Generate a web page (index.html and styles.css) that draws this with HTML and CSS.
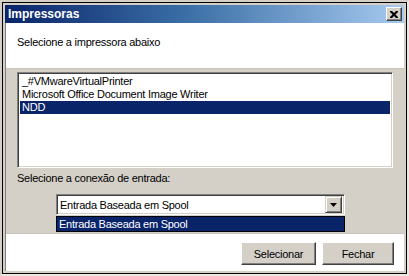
FILE: index.html
```html
<!DOCTYPE html>
<html>
<head>
<meta charset="utf-8">
<link rel="stylesheet" href="styles.css">
</head>
<body>
<div class="window">
  <div class="frame">
    <div class="titlebar">
      <span class="title">Impressoras</span>
      <div class="close">
        <svg width="8" height="7" viewBox="0 0 8 7"><path d="M0 0h2l2 2 2-2h2v1l-2.5 2.5L8 6v1H6L4 5 2 7H0V6l2.5-2.5L0 1z" fill="#000"/></svg>
      </div>
    </div>
    <div class="client">
      <div class="header">Selecione a impressora abaixo</div>
      <div class="body">
        <div class="listbox">
          <div class="item">_#VMwareVirtualPrinter</div>
          <div class="item">Microsoft Office Document Image Writer</div>
          <div class="item selected">NDD</div>
        </div>
        <div class="label">Selecione a conexão de entrada:</div>
        <div class="combo-wrap">
          <div class="combo">
            <span class="combo-text">Entrada Baseada em Spool</span>
            <div class="drop-btn">
              <svg width="7" height="4" viewBox="0 0 7 4"><path d="M0 0h7L3.5 4z" fill="#000"/></svg>
            </div>
          </div>
          <div class="dropdown">
            <div class="drop-item">Entrada Baseada em Spool</div>
          </div>
        </div>
      </div>
      <div class="footer">
        <div class="btn btn-sel">Selecionar</div>
        <div class="btn btn-close">Fechar</div>
      </div>
    </div>
  </div>
</div>
</body>
</html>
```

FILE: styles.css
```css
html, body {
  margin: 0;
  padding: 0;
  background: #ffffff;
}
body {
  font-family: "Liberation Sans", Arial, sans-serif;
  font-size: 11px;
  letter-spacing: -0.25px;
  color: #000;
}
.window {
  width: 409px;
  height: 276px;
  box-sizing: border-box;
  border: 2px solid;
  border-color: #d4d0c8 #ece9e2 #ece9e2 #d4d0c8;
}
.frame {
  height: 100%;
  box-sizing: border-box;
  border: 1px solid #000;
  padding: 2px;
  background: #d4d0c8;
  display: flex;
  flex-direction: column;
}
.titlebar {
  height: 18px;
  flex: none;
  background: linear-gradient(to right, #0a246a 0%, #3a6ea5 45%, #a6caf0 100%);
  display: flex;
  align-items: center;
  padding: 0 2px 0 3px;
}
.title {
  color: #fff;
  font-weight: bold;
  font-size: 12px;
  letter-spacing: 0;
  flex: 1;
}
.close {
  width: 16px;
  height: 14px;
  box-sizing: border-box;
  background: #d4d0c8;
  border: 1px solid;
  border-color: #fff #404040 #404040 #fff;
  box-shadow: inset -1px -1px #808080;
  display: flex;
  align-items: center;
  justify-content: center;
}
.client {
  flex: 1;
  display: flex;
  flex-direction: column;
  border-left: 1px solid #808080;
}
.header {
  height: 46px;
  box-sizing: border-box;
  background: #fff;
  padding: 13px 0 0 11px;
  border-bottom: 1px solid #c8c4bc;
}
.body {
  height: 164px;
  box-sizing: border-box;
  padding: 3px 11px 0 11px;
  background: #d4d0c8;
}
.listbox {
  height: 96px;
  box-sizing: border-box;
  background: #fff;
  border: 1px solid;
  border-color: #808080 #fff #fff #808080;
  box-shadow: inset 1px 1px #404040, inset -1px -1px #d4d0c8;
  padding: 2px 2px;
}
.item {
  height: 13px;
  line-height: 13px;
  padding-left: 2px;
  white-space: nowrap;
}
.item.selected {
  background: #0a246a;
  color: #fff;
}
.label {
  margin-top: 4px;
  height: 13px;
  line-height: 13px;
}
.combo-wrap {
  position: relative;
  margin: 9px 0 0 39px;
  width: 289px;
}
.combo {
  height: 21px;
  box-sizing: border-box;
  background: #fff;
  border: 1px solid;
  border-color: #808080 #fff #fff #808080;
  box-shadow: inset 1px 1px #404040, inset -1px -1px #d4d0c8;
  display: flex;
  align-items: center;
  padding: 2px 2px 2px 3px;
}
.combo-text {
  flex: 1;
}
.drop-btn {
  width: 17px;
  height: 17px;
  box-sizing: border-box;
  background: #d4d0c8;
  border: 1px solid;
  border-color: #d4d0c8 #404040 #404040 #d4d0c8;
  box-shadow: inset 1px 1px #fff, inset -1px -1px #808080;
  display: flex;
  align-items: center;
  justify-content: center;
}
.dropdown {
  position: absolute;
  left: 0;
  top: 22px;
  width: 289px;
  box-sizing: border-box;
  border: 1px solid #000;
  background: #fff;
}
.drop-item {
  height: 14px;
  line-height: 14px;
  background: #0a246a;
  color: #fff;
  padding-left: 2px;
}
.footer {
  flex: 1;
  background: #fff;
  border-top: 1px solid #c8c4bc;
  display: flex;
  justify-content: flex-end;
  gap: 6px;
  padding: 8px 10px 0 0;
}
.btn {
  height: 23px;
  box-sizing: border-box;
  background: #d4d0c8;
  border: 1px solid;
  border-color: #fff #404040 #404040 #fff;
  box-shadow: inset -1px -1px #808080;
  display: flex;
  align-items: center;
  justify-content: center;
}
.btn-sel { width: 75px; }
.btn-close { width: 72px; }
```
